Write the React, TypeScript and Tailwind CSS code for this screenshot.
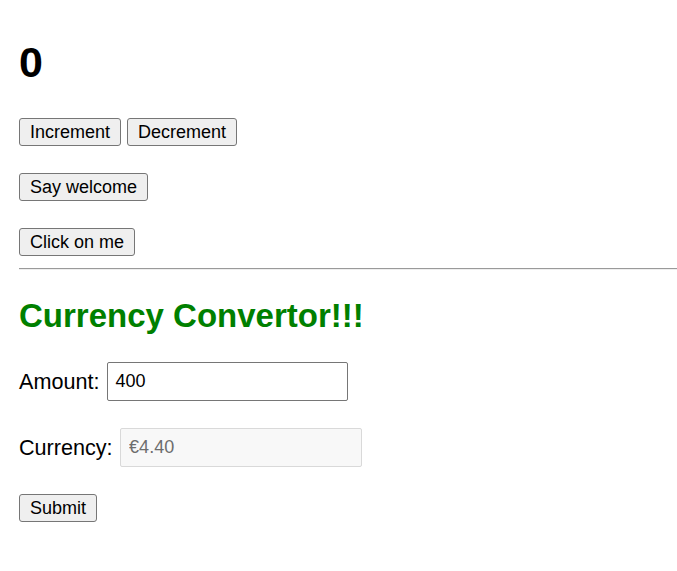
import React from 'react';

const btn =
  'h-[28px] px-[10px] border border-[#767676] rounded-[3px] bg-[#efefef] text-[18px] leading-none text-black';

export default function App() {
  return (
    <div className="min-h-screen bg-white pl-[19px] pt-[38px] text-black font-['Liberation_Sans',Arial,sans-serif]">
      {/* Counter */}
      <h1 className="text-[43px] leading-[49px] font-bold">0</h1>

      <div className="mt-[31px] flex gap-[6px]">
        <button className={btn}>Increment</button>
        <button className={btn}>Decrement</button>
      </div>

      <div className="mt-[27px] flex">
        <button className={btn}>Say welcome</button>
      </div>

      <div className="mt-[27px] flex">
        <button className={btn}>Click on me</button>
      </div>

      <hr className="mt-[12px] h-[2px] border-0 border-t border-t-[#9a9a9a] border-b border-b-[#eeeeee]" />

      {/* Currency convertor */}
      <h2 className="mt-[27px] text-[33px] leading-[37px] font-bold text-[#008000]">
        Currency Convertor!!!
      </h2>

      <div className="mt-[28px] flex items-center">
        <label className="text-[21.6px] leading-[25px]">Amount:</label>
        <input
          className="ml-[8px] w-[241px] h-[39px] px-[7px] border border-[#767676] rounded-[2px] bg-white text-[18px] text-black outline-none"
          defaultValue="400"
        />
      </div>

      <div className="mt-[27px] flex items-center">
        <label className="text-[21.6px] leading-[25px]">Currency:</label>
        <input
          className="ml-[7.5px] w-[242px] h-[39px] px-[8px] border border-[#d9d9d9] rounded-[2px] bg-[#f8f8f8] text-[18px] text-[#6d6d6d] outline-none"
          value="€4.40"
          disabled
          readOnly
        />
      </div>

      <div className="mt-[27px] flex">
        <button className={btn}>Submit</button>
      </div>
    </div>
  );
}
